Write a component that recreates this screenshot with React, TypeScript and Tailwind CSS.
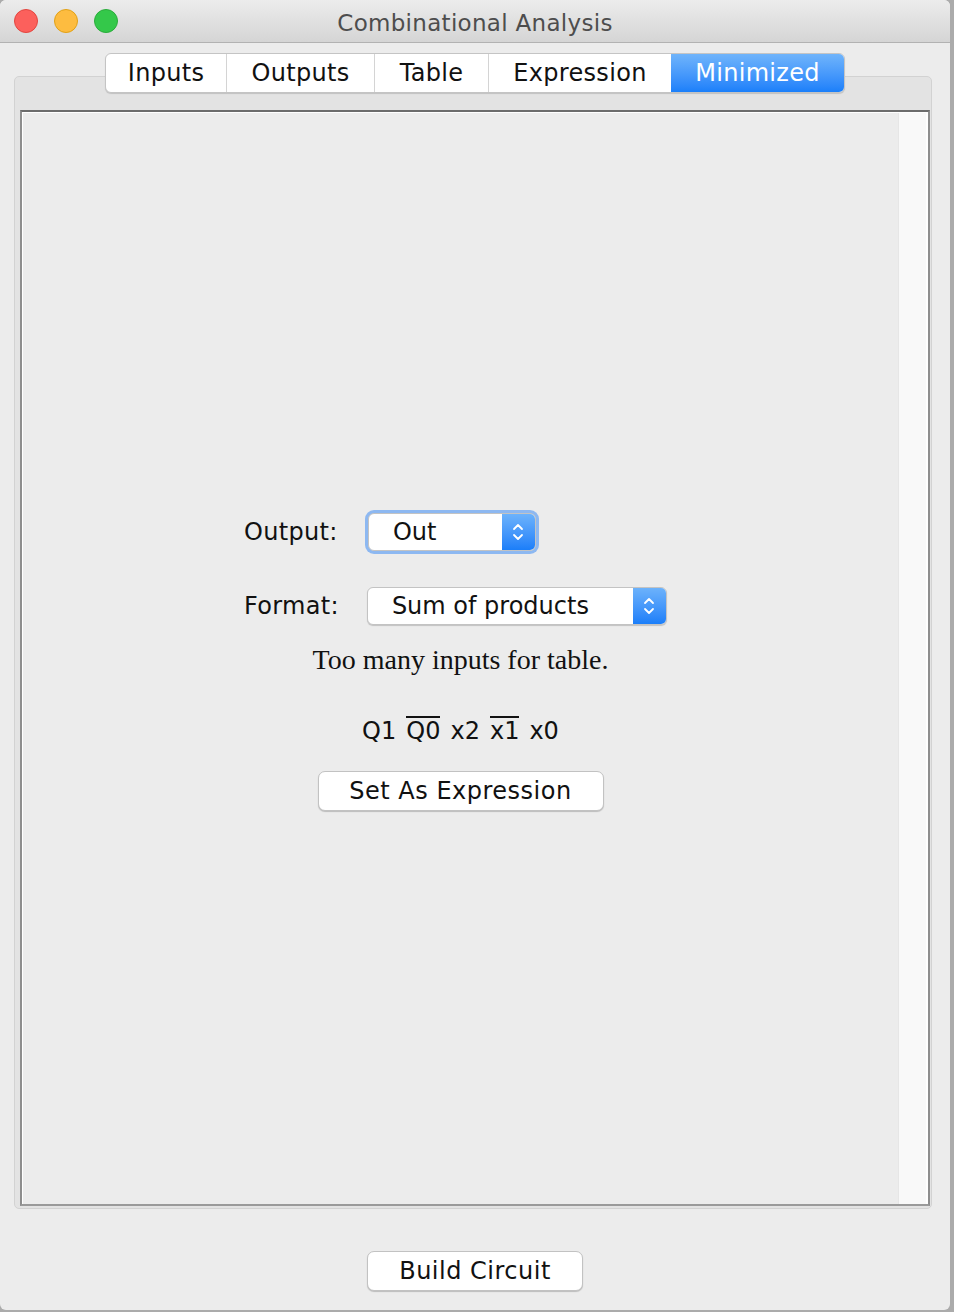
import React from "react";

const tabs = [
  { label: "Inputs", className: "w-[120px]" },
  { label: "Outputs", className: "w-[148px] border-l border-[#d4d4d4]" },
  { label: "Table", className: "w-[114px] border-l border-[#d4d4d4]" },
  { label: "Expression", className: "w-[183px] border-l border-[#d4d4d4]" },
];

function Stepper() {
  return (
    <div className="flex w-[33px] items-center justify-center self-stretch rounded-r-[5px] bg-gradient-to-b from-[#6cb2fb] to-[#1a7ef9]">
      <svg width="12" height="22" viewBox="0 0 12 22" fill="none">
        <path d="M2 8 L6 4 L10 8" stroke="white" strokeWidth="1.8" strokeLinecap="round" strokeLinejoin="round" />
        <path d="M2 14 L6 18 L10 14" stroke="white" strokeWidth="1.8" strokeLinecap="round" strokeLinejoin="round" />
      </svg>
    </div>
  );
}

function Select({ value, width, focused }: { value: string; width: string; focused?: boolean }) {
  return (
    <div
      className={`flex h-[38px] ${width} items-stretch rounded-[6px] border border-[#c3c3c3] bg-white shadow-[0_1px_1px_rgba(0,0,0,0.18)] ${
        focused ? "ring-[3px] ring-[#8db8f1]" : ""
      }`}
    >
      <span className="flex flex-1 items-center pl-[24px] text-[24px] text-[#111]">{value}</span>
      <Stepper />
    </div>
  );
}

function PushButton({ label, width }: { label: string; width: string }) {
  return (
    <button
      className={`flex h-[40px] ${width} items-center justify-center rounded-[7px] border border-[#c2c2c2] bg-white text-[24px] tracking-[0.5px] text-[#111] shadow-[0_1px_1px_rgba(0,0,0,0.2)]`}
    >
      {label}
    </button>
  );
}

export default function App() {
  return (
    <div className="flex h-[1312px] w-[954px] bg-[#ababab] font-['DejaVu_Sans','Liberation_Sans',sans-serif]">
      <div className="flex h-[1310px] w-[950px] flex-col overflow-hidden rounded-[6px] bg-[#ececec]">
        {/* title bar */}
        <div className="relative flex h-[43px] items-center border-b border-[#b2b2b2] bg-gradient-to-b from-[#ececec] to-[#d5d5d5] pl-[14px]">
          <div className="flex gap-[16px]">
            <span className="size-[24px] rounded-full border border-[#e2463f] bg-[#fc605c]" />
            <span className="size-[24px] rounded-full border border-[#e1a116] bg-[#fdbc40]" />
            <span className="size-[24px] rounded-full border border-[#2aac3b] bg-[#34c84a]" />
          </div>
          <span className="absolute inset-x-0 top-[6px] text-center text-[23px] tracking-[0.3px] text-[#4d4d4d]">
            Combinational Analysis
          </span>
        </div>

        {/* tabs */}
        <div className="relative z-10 mt-[10px] -mb-[17px] flex justify-center">
          <div className="flex h-[40px] overflow-hidden rounded-[6px] border border-[#c4c4c4] bg-white shadow-[0_1px_1px_rgba(0,0,0,0.15)]">
            {tabs.map((tab) => (
              <div
                key={tab.label}
                className={`flex items-center justify-center text-[24px] tracking-[0.3px] text-[#111] ${tab.className}`}
              >
                {tab.label}
              </div>
            ))}
            <div className="flex w-[173px] items-center justify-center bg-gradient-to-b from-[#6fb4fb] to-[#1a7ffa] text-[24px] tracking-[0.3px] text-white">
              Minimized
            </div>
          </div>
        </div>

        {/* tab pane */}
        <div className="ml-[14px] w-[918px] rounded-[5px] border border-[#d2d2d2] bg-[#e3e3e3] pt-[33px] pr-[1px] pb-[2px] pl-[5px]">
          <div className="flex h-[1096px] border-2 border-[#8e8e8e] border-t-[#6c6c6c] border-b-[#9a9a9a]">
            <div className="flex flex-1 border-t border-l border-r-2 border-white">
              <div className="flex flex-1 flex-col items-center justify-center bg-[#ececec] pt-[6px]">
                <div className="grid grid-cols-[auto_auto] items-center gap-x-[29px] gap-y-[36px] pr-[10px]">
                  <span className="text-[24px] tracking-[0.3px] text-[#111]">Output:</span>
                  <Select value="Out" width="w-[168px]" focused />
                  <span className="text-[24px] tracking-[0.3px] text-[#111]">Format:</span>
                  <div className="-ml-[1px]">
                    <Select value="Sum of products" width="w-[300px]" />
                  </div>
                </div>

                <p className="mt-[19px] font-['Liberation_Serif',serif] text-[28px] leading-[32px] text-[#111]">
                  Too many inputs for table.
                </p>

                <p className="mt-[40px] flex gap-[10px] text-[24px] leading-[30px] text-[#111]">
                  <span>Q1</span>
                  <span className="border-t-2 border-[#111] leading-[26px]">Q0</span>
                  <span>x2</span>
                  <span className="border-t-2 border-[#111] leading-[26px]">x1</span>
                  <span>x0</span>
                </p>

                <div className="mt-[25px]">
                  <PushButton label="Set As Expression" width="w-[286px]" />
                </div>
              </div>
              <div className="w-[28px] border-l border-[#e6e6e6] bg-[#f9f9f9]" />
            </div>
          </div>
        </div>

        {/* bottom button */}
        <div className="mt-[42px] flex justify-center">
          <PushButton label="Build Circuit" width="w-[216px]" />
        </div>
      </div>
    </div>
  );
}
